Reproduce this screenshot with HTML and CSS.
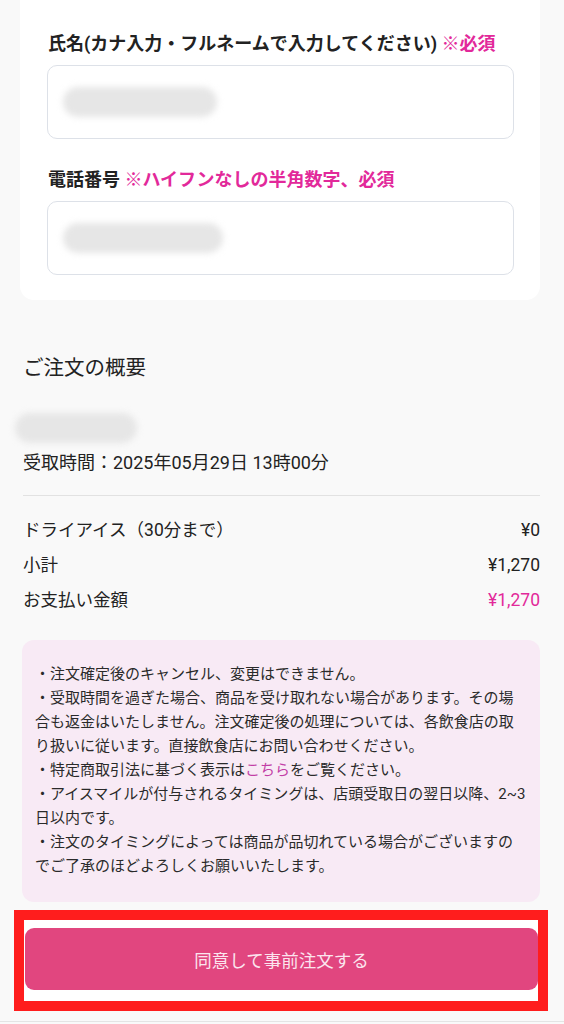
FILE: index.html
```html
<!DOCTYPE html>
<html lang="ja">
<head>
    <meta charset="UTF-8">
    <meta name="viewport" content="width=device-width, initial-scale=1.0">
    <title>ご注文の確認</title>
    <link rel="stylesheet" href="styles.css">
</head>
<body>
    <!-- Customer info card -->
    <div class="form-card">
        <div class="form-group">
            <label class="form-label">氏名(カナ入力・フルネームで入力してください) <span class="required">※必須</span></label>
            <div class="form-input">
                <span class="blur-bar name-bar"></span>
            </div>
        </div>
        <div class="form-group">
            <label class="form-label">電話番号 <span class="required">※ハイフンなしの半角数字、必須</span></label>
            <div class="form-input">
                <span class="blur-bar tel-bar"></span>
            </div>
        </div>
    </div>

    <!-- Order summary -->
    <div class="summary">
        <h2 class="summary-title">ご注文の概要</h2>
        <div class="blur-bar shop-bar"></div>
        <p class="pickup-time">受取時間：2025年05月29日 13時00分</p>

        <div class="price-list">
            <div class="price-row">
                <span>ドライアイス（30分まで）</span>
                <span>¥0</span>
            </div>
            <div class="price-row">
                <span>小計</span>
                <span>¥1,270</span>
            </div>
            <div class="price-row">
                <span>お支払い金額</span>
                <span class="total">¥1,270</span>
            </div>
        </div>

        <div class="notice">
            <p>・注文確定後のキャンセル、変更はできません。</p>
            <p>・受取時間を過ぎた場合、商品を受け取れない場合があります。その場合も返金はいたしません。注文確定後の処理については、各飲食店の取り扱いに従います。直接飲食店にお問い合わせください。</p>
            <p>・特定商取引法に基づく表示は<a href="#" class="notice-link">こちら</a>をご覧ください。</p>
            <p>・アイスマイルが付与されるタイミングは、店頭受取日の翌日以降、2~3日以内です。</p>
            <p>・注文のタイミングによっては商品が品切れている場合がございますのでご了承のほどよろしくお願いいたします。</p>
        </div>
    </div>

    <!-- Submit button (highlighted) -->
    <div class="submit-frame">
        <button type="submit" class="submit-btn">同意して事前注文する</button>
    </div>
    <div class="page-bottom"></div>
</body>
</html>
```

FILE: styles.css
```css
:root {
    --page-bg: #f9f9f9;
    --text-color: #222222;
    --accent: #e2299a;
    --input-border: #dde1e8;
    --notice-bg: #f8eaf5;
    --button-bg: #e1467f;
    --frame-red: #ff1d1d;
}

body {
    font-family: Roboto, 'Noto Sans CJK JP', sans-serif;
    background-color: var(--page-bg);
    color: var(--text-color);
    margin: 0;
    padding: 0;
}

p {
    margin: 0;
}

/* Form card */
.form-card {
    background-color: #ffffff;
    margin: 0 24px 0 20px;
    padding: 31px 26px 25px 27px;
    border-radius: 0 0 14px 14px;
}

.form-group + .form-group {
    margin-top: 28px;
}

.form-label {
    display: block;
    font-size: 18px;
    font-weight: bold;
    line-height: 26px;
    margin-bottom: 8px;
    margin-left: 1px;
}

.required {
    color: var(--accent);
}

.form-input {
    height: 74px;
    box-sizing: border-box;
    border: 1.5px solid var(--input-border);
    border-radius: 10px;
    background-color: #ffffff;
    display: flex;
    align-items: center;
    padding-left: 15px;
}

/* Blurred personal data */
.blur-bar {
    display: block;
    background-color: #e6e6e6;
    border-radius: 16px;
    filter: blur(3px);
}

.name-bar {
    width: 154px;
    height: 30px;
}

.tel-bar {
    width: 160px;
    height: 30px;
}

/* Summary */
.summary {
    padding: 53px 24px 0 23px;
}

.summary-title {
    margin: 0;
    font-size: 20.5px;
    font-weight: normal;
    line-height: 30px;
}

.shop-bar {
    width: 122px;
    height: 30px;
    margin: 30px 0 0 -8px;
}

.pickup-time {
    font-size: 18px;
    line-height: 26px;
    margin-top: 7px;
    padding-bottom: 19px;
    border-bottom: 1px solid #e2e2e2;
}

.price-list {
    display: flex;
    flex-direction: column;
    gap: 9px;
    padding-top: 21px;
}

.price-row {
    display: flex;
    justify-content: space-between;
    font-size: 17.5px;
    line-height: 26px;
}

.total {
    color: var(--accent);
}

.notice {
    background-color: var(--notice-bg);
    border-radius: 12px;
    margin: 27px 0 0 -1px;
    padding: 22px 12px 24px 13px;
    font-size: 15px;
    line-height: 24px;
    color: #2a2a2a;
}

.notice-link {
    color: #c23ea6;
    text-decoration: none;
}

/* Highlighted submit area */
.submit-frame {
    margin: 8px 16px 0 14px;
    border: 10px solid var(--frame-red);
    background-color: #ffffff;
    padding: 8px 0 11px 1px;
}

.submit-btn {
    display: block;
    width: 100%;
    height: 62px;
    border: none;
    border-radius: 9px;
    background-color: var(--button-bg);
    color: #fbe4ee;
    font-family: inherit;
    font-size: 17.5px;
    cursor: pointer;
}

.page-bottom {
    height: 10px;
    border-bottom: 1px solid #e4e4e4;
}
```
